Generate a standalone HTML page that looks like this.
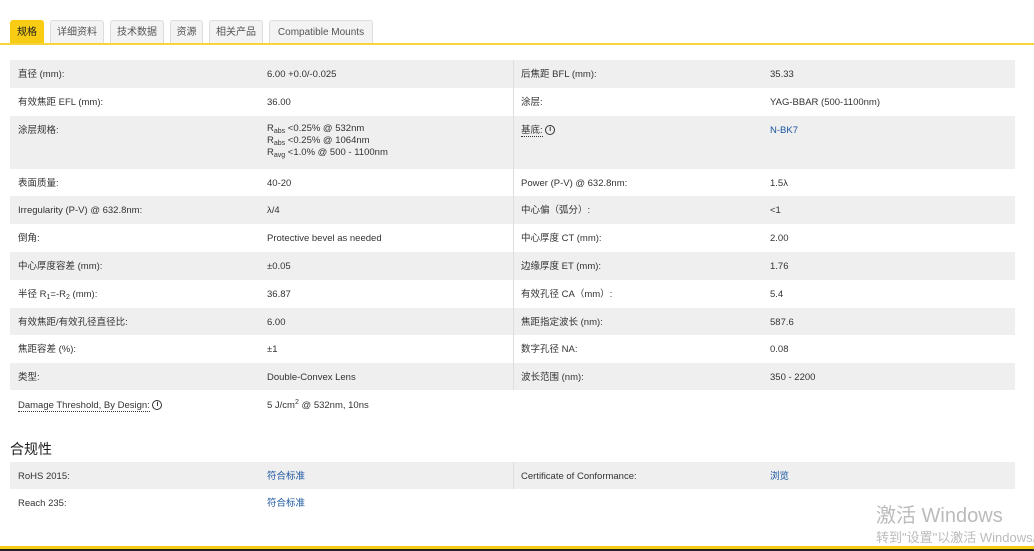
<!DOCTYPE html>
<html><head><meta charset="utf-8"><style>
body{margin:0;width:1034px;height:551px;background:#fff;font-family:"Liberation Sans","Noto Sans CJK SC",sans-serif;font-size:9.5px;color:#333;position:relative;overflow:hidden}
.tabs{position:absolute;top:20px;left:10px;height:23px}
.tab{position:absolute;top:0;height:23px;border:1px solid #ddd;border-bottom:none;background:#f3f3f3;border-radius:3px 3px 0 0;box-sizing:border-box;line-height:24px;text-align:center;color:#555;font-size:10px}
.tab.a{background:#f7cc12;border-color:#f7cc12;color:#222}
.yl{position:absolute;top:43px;left:0;width:1034px;height:2px;background:#f7d43a}
.row{position:absolute;left:10px;width:1005px;height:28px}
.g{background:#efefef}
.row>span{position:absolute;top:9px;white-space:nowrap;line-height:12px;height:12px}
.div{position:absolute;left:503px;top:0;bottom:0;border-left:1px solid #ddd}
.l1{left:8px}.v1{left:257px}.l2{left:511px}.v2{left:760px}
a{color:#1a55a0;text-decoration:none}
sub{font-size:7px;vertical-align:-2px;line-height:0}
sup{font-size:7px;line-height:0}
.u{border-bottom:1px dotted #333}
.i{display:inline-block;width:8px;height:8px;border:1.2px solid #333;border-radius:50%;font-size:7px;line-height:8px;text-align:center;font-weight:bold;vertical-align:middle}
</style></head><body>
<div class="tabs">
<div class="tab a" style="left:0;width:34px">规格</div>
<div class="tab" style="left:40px;width:54px">详细资料</div>
<div class="tab" style="left:100px;width:54px">技术数据</div>
<div class="tab" style="left:160px;width:33px">资源</div>
<div class="tab" style="left:199px;width:54px">相关产品</div>
<div class="tab" style="left:259px;width:104px">Compatible Mounts</div>
</div>
<div class="yl"></div>

<div class="row g" style="top:60px"><div class="div"></div><span class="l1">直径 (mm):</span><span class="v1">6.00 +0.0/-0.025</span><span class="l2">后焦距 BFL (mm):</span><span class="v2">35.33</span></div>
<div class="row" style="top:88px"><div class="div"></div><span class="l1">有效焦距 EFL (mm):</span><span class="v1">36.00</span><span class="l2">涂层:</span><span class="v2">YAG-BBAR (500-1100nm)</span></div>
<div class="row g" style="top:116px;height:53px"><div class="div"></div><span class="l1">涂层规格:</span><span class="v1" style="height:auto;top:7px">R<sub>abs</sub> &lt;0.25% @ 532nm<br>R<sub>abs</sub> &lt;0.25% @ 1064nm<br>R<sub>avg</sub> &lt;1.0% @ 500 - 1100nm</span><span class="l2"><span class="u">基底:</span> <span class="i">i</span></span><span class="v2"><a>N-BK7</a></span></div>
<div class="row" style="top:169px;height:27px"><div class="div"></div><span class="l1">表面质量:</span><span class="v1">40-20</span><span class="l2">Power (P-V) @ 632.8nm:</span><span class="v2">1.5λ</span></div>
<div class="row g" style="top:196px"><div class="div"></div><span class="l1">Irregularity (P-V) @ 632.8nm:</span><span class="v1">λ/4</span><span class="l2">中心偏（弧分）:</span><span class="v2">&lt;1</span></div>
<div class="row" style="top:224px"><div class="div"></div><span class="l1">倒角:</span><span class="v1">Protective bevel as needed</span><span class="l2">中心厚度 CT (mm):</span><span class="v2">2.00</span></div>
<div class="row g" style="top:252px"><div class="div"></div><span class="l1">中心厚度容差 (mm):</span><span class="v1">±0.05</span><span class="l2">边缘厚度 ET (mm):</span><span class="v2">1.76</span></div>
<div class="row" style="top:280px"><div class="div"></div><span class="l1">半径 R<sub>1</sub>=-R<sub>2</sub> (mm):</span><span class="v1">36.87</span><span class="l2">有效孔径 CA（mm）:</span><span class="v2">5.4</span></div>
<div class="row g" style="top:308px;height:27px"><div class="div"></div><span class="l1">有效焦距/有效孔径直径比:</span><span class="v1">6.00</span><span class="l2">焦距指定波长 (nm):</span><span class="v2">587.6</span></div>
<div class="row" style="top:335px"><div class="div"></div><span class="l1">焦距容差 (%):</span><span class="v1">±1</span><span class="l2">数字孔径 NA:</span><span class="v2">0.08</span></div>
<div class="row g" style="top:363px;height:27px"><div class="div"></div><span class="l1">类型:</span><span class="v1">Double-Convex Lens</span><span class="l2">波长范围 (nm):</span><span class="v2">350 - 2200</span></div>
<div class="row" style="top:391px"><span class="l1"><span class="u">Damage Threshold, By Design:</span> <span class="i">i</span></span><span class="v1">5 J/cm<sup>2</sup> @ 532nm, 10ns</span></div>

<div style="position:absolute;left:10px;top:440px;font-size:14px;color:#222;line-height:18px">合规性</div>
<div class="row g" style="top:462px;height:27px"><div class="div"></div><span class="l1">RoHS 2015:</span><span class="v1"><a>符合标准</a></span><span class="l2">Certificate of Conformance:</span><span class="v2"><a>浏览</a></span></div>
<div class="row" style="top:489px"><span class="l1">Reach 235:</span><span class="v1"><a>符合标准</a></span></div>

<div style="position:absolute;left:876px;top:503px;font-size:20px;color:#bbb;white-space:nowrap;line-height:26px">激活 Windows</div>
<div style="position:absolute;left:876px;top:530px;font-size:13px;color:#bbb;white-space:nowrap;line-height:16px">转到"设置"以激活 Windows。</div>
<div style="position:absolute;left:0;top:546px;width:1034px;height:3px;background:#f7cc12"></div>
<div style="position:absolute;left:0;top:549px;width:1034px;height:2px;background:#222"></div>
</body></html>
